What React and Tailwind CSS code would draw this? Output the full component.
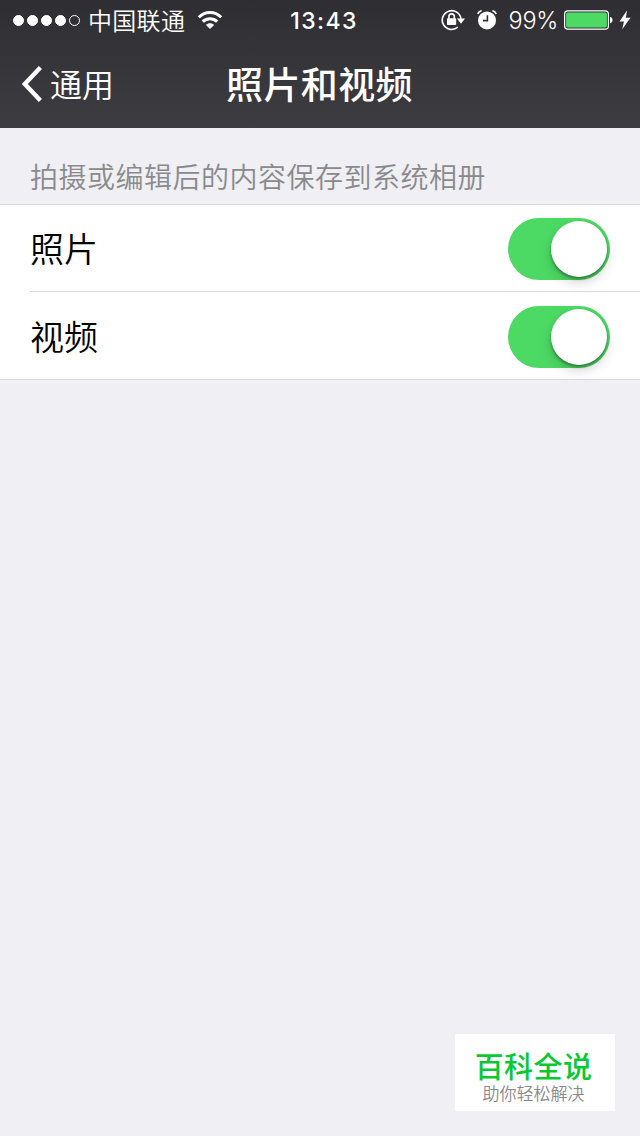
const rows = [
  { label: '照片', enabled: true },
  { label: '视频', enabled: true }
];

const signal = [true, true, true, true, false];

const WifiIcon = () => (
  <svg className="w-[26px] h-5" viewBox="0 0 26 20" fill="none" stroke="#fff" strokeWidth="3">
    <path d="M1.8 7.2C8.2 0.9 17.8 0.9 24.2 7.2" />
    <path d="M5.8 11.6C10 7.7 16 7.7 20.2 11.6" />
    <path d="M13 19L8.9 14.9C11.2 12.8 14.8 12.8 17.1 14.9Z" fill="#fff" stroke="none" />
  </svg>
);

const RotationLockIcon = () => (
  <svg className="w-6 h-[22px]" viewBox="0 0 24 22" fill="none" stroke="#fff" strokeWidth="1.6">
    <path d="M16.8 18.2A9.4 9.4 0 1 1 20 10" />
    <path d="M15.9 9.6H24L20 14.8Z" fill="#fff" stroke="none" />
    <rect x="6" y="9.2" width="9.2" height="6.8" rx="0.8" fill="#fff" stroke="none" />
    <path d="M7.9 9.8V7.6A2.7 2.7 0 0 1 13.3 7.6V9.8" />
  </svg>
);

const AlarmIcon = () => (
  <svg className="w-5 h-5" viewBox="0 0 20 20" fill="none">
    <circle cx="10" cy="10.4" r="9" fill="#fff" />
    <path d="M10.4 5.2V10.6H6" stroke="#323136" strokeWidth="1.6" />
    <path d="M0.8 4C1.4 2.2 2.7 1.1 4.6 0.7M19.2 4C18.6 2.2 17.3 1.1 15.4 0.7" stroke="#fff" strokeWidth="1.6" />
  </svg>
);

const BatteryIcon = () => (
  <svg className="w-[49px] h-5" viewBox="0 0 49 20" fill="none">
    <rect x="0.6" y="0.9" width="43.8" height="18.2" rx="3.2" stroke="#fff" strokeWidth="1.2" />
    <rect x="2.1" y="2.4" width="40.8" height="15.2" rx="1.8" fill="#4cd964" />
    <path d="M46 6.8C49.4 7.6 49.4 12.6 46 13.4Z" fill="#fff" />
  </svg>
);

const BoltIcon = () => (
  <svg className="w-3 h-5" viewBox="0 0 12 20" fill="#fff">
    <path d="M8 0.5L0.5 11.4H5L3.2 19.3L11.5 7.8H6.9Z" />
  </svg>
);

const StatusBar = () => (
  <div className="grid h-10 grid-cols-[1fr_auto_1fr] items-center pr-[9px] pl-[13px]">
    <div className="flex items-center">
      <div className="flex gap-[3px]">
        {signal.map((filled, i) => (
          <span
            key={i}
            className={`size-[11px] rounded-full border border-white ${filled ? 'bg-white' : ''}`}
          />
        ))}
      </div>
      <span className="ml-2 text-2xl font-[350] tracking-[0.3px]">中国联通</span>
      <span className="ml-3"><WifiIcon /></span>
    </div>
    <span className="mt-0.5 ml-1 font-[Inter] text-[23px] font-medium tracking-[1.4px]">13:43</span>
    <div className="flex items-center justify-end">
      <RotationLockIcon />
      <span className="ml-3"><AlarmIcon /></span>
      <span className="mt-0.5 ml-3 font-[Inter] text-[23.5px] font-[350] tracking-[-0.3px]">99%</span>
      <span className="ml-1.5"><BatteryIcon /></span>
      <span className="ml-1.5"><BoltIcon /></span>
    </div>
  </div>
);

const Switch = ({ on }) => (
  <div
    role="switch"
    aria-checked={on}
    className={`flex h-[62px] w-[102px] items-center rounded-full p-[3px] ${on ? 'justify-end bg-[#4cd964]' : 'bg-gray-200'}`}
  >
    <span className="size-14 rounded-full bg-white shadow-[0_6px_12px_rgba(0,0,0,0.16),0_2px_3px_rgba(0,0,0,0.35)]" />
  </div>
);

const App = () => {
  return (
    <div className="relative h-[1136px] w-[640px] overflow-hidden bg-[#efeff4] font-['Noto_Sans_CJK_SC',sans-serif]">
      <header className="h-32 bg-linear-to-b from-[#2f2e33] to-[#3d3c41] text-white">
        <StatusBar />
        <nav className="grid h-[88px] grid-cols-[1fr_auto_1fr] items-center pl-[22px]">
          <div className="flex items-center gap-2">
            <svg className="h-9 w-5" viewBox="0 0 20 36" fill="none" stroke="#fff" strokeWidth="4.4">
              <path d="M18.4 1.6L2.8 18L18.4 34.4" />
            </svg>
            <span className="pb-0.5 text-[32px] font-[350]">通用</span>
          </div>
          <h1 className="mr-[23px] pb-0.5 text-[37px] leading-none font-medium tracking-[0.4px]">照片和视频</h1>
        </nav>
      </header>

      <main>
        <h2 className="flex h-[76px] items-end px-[30px] pb-[7px] text-[28px] font-[350] tracking-[0.5px] text-[#8a8a8c]">
          拍摄或编辑后的内容保存到系统相册
        </h2>
        <ul className="border-y border-[#d9d9dc] bg-white pl-[30px]">
          {rows.map((row) => (
            <li
              key={row.label}
              className="flex h-[87px] items-center justify-between border-b border-[#d9d9dc] pt-px pr-[30px] last:border-b-0 last:pt-[3px]"
            >
              <span className="pb-[3px] text-[34px] font-[350] text-black">{row.label}</span>
              <Switch on={row.enabled} />
            </li>
          ))}
        </ul>
      </main>

      {/* Site badge */}
      <aside className="absolute right-[25px] bottom-[25px] flex h-[77px] w-40 flex-col items-center bg-white pt-[15px] pr-[3px]">
        <span className="text-[29px] leading-8 font-medium tracking-[0.4px] text-[#08c934]">百科全说</span>
        <span className="text-[17px] leading-6 font-[350] text-[#8a8a8c]">助你轻松解决</span>
      </aside>
    </div>
  );
};

export default App;
